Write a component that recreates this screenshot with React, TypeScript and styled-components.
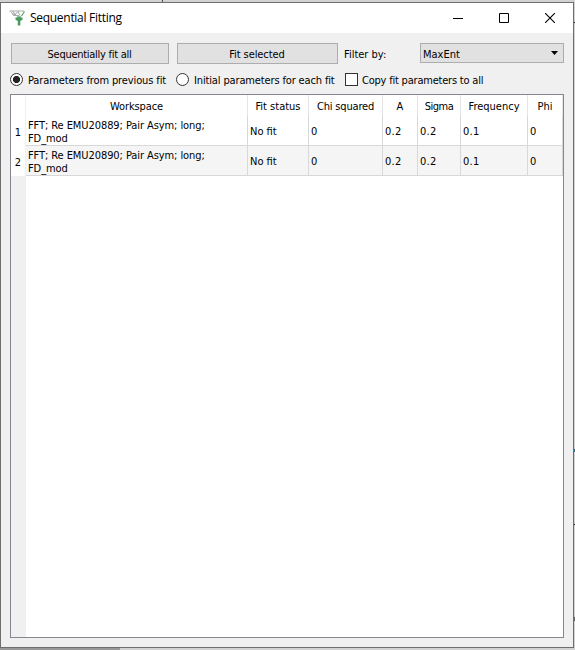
import React from 'react';
import styled, { createGlobalStyle } from 'styled-components';

const GlobalStyle = createGlobalStyle`
  * { box-sizing: border-box; }
  body { margin: 0; overflow: hidden; background: #c9c9c9; }
`;

const Desktop = styled.div`
  width: 575px;
  height: 650px;
  padding: 2px 1px 2px 0;
  background:
    linear-gradient(#1e1e1e, #1e1e1e) 574px 22px / 1px 1px no-repeat,
    linear-gradient(#2b6a94, #2b6a94) 574px 449px / 1px 3px no-repeat,
    linear-gradient(#111, #111) 574px 524px / 1px 1px no-repeat,
    linear-gradient(#666, #666) 574px 617px / 1px 4px no-repeat,
    linear-gradient(#555, #555) 162px 0 / 1px 2px no-repeat,
    linear-gradient(#999, #999) 0 648px / 120px 2px no-repeat,
    #d2d2d2;
`;

const Window = styled.main`
  display: flex;
  flex-direction: column;
  width: 574px;
  height: 646px;
  border: 1px solid #6e6e6e;
  background: #f0f0f0;
  color: #000;
  font: 11px/13px 'DejaVu Sans Condensed', 'DejaVu Sans', sans-serif;
  font-stretch: condensed;
`;

const TitleBar = styled.header`
  display: flex;
  align-items: center;
  height: 30px;
  padding: 0 1px 0 8px;
  background: #fff;
`;

const Title = styled.h1`
  flex: 1;
  margin: 0 0 0 4px;
  font: 400 12px/16px 'Open Sans', sans-serif;
  letter-spacing: -0.29px;
`;

const Caption = styled.button`
  display: flex;
  align-items: center;
  justify-content: center;
  width: 46px;
  height: 29px;
  padding: 0;
  border: 0;
  background: none;
  &:last-child { width: 45px; }
`;

const Text = styled.span<{ $spacing?: number }>`
  white-space: pre;
  letter-spacing: ${({ $spacing = 0 }) => $spacing}px;
`;

const Controls = styled.div`
  display: flex;
  align-items: flex-start;
  height: 21px;
  margin: 10px 9px 0 10px;
`;

const PushButton = styled.button<{ $width: number }>`
  width: ${({ $width }) => $width}px;
  height: 21px;
  margin-right: 8px;
  padding: 2px 1px 0 0;
  border: 1px solid #adadad;
  background: #e1e1e1;
  color: #000;
  font: inherit;
`;

const FilterLabel = styled.label`
  width: 76px;
  margin-left: -2px;
  padding-top: 5px;
`;

const Combo = styled.div`
  display: flex;
  align-items: center;
  justify-content: space-between;
  width: 144px;
  height: 20px;
  padding: 2px 5px 0 2px;
  border: 1px solid #adadad;
  background: #e1e1e1;
  svg { margin-bottom: 2px; }
`;

const Options = styled.div`
  display: flex;
  align-items: center;
  height: 15px;
  margin: 8px 9px 0 9px;
`;

const Option = styled.label<{ $width: number; $gap?: number }>`
  display: flex;
  align-items: center;
  gap: ${({ $gap = 5 }) => $gap}px;
  width: ${({ $width }) => $width}px;
  ${Text} { padding-top: 2px; }
`;

const Radio = styled.i<{ $on?: boolean }>`
  flex: none;
  width: 13px;
  height: 13px;
  border: 1px solid #333;
  border-radius: 50%;
  background: ${({ $on }) => ($on ? 'radial-gradient(circle, #222 3.2px, #fff 3.9px)' : '#fff')};
`;

const CheckBox = styled.i`
  flex: none;
  width: 13px;
  height: 13px;
  border: 1px solid #333;
  background: #fff;
`;

const TableView = styled.section`
  width: 554px;
  height: 544px;
  margin: 7px 0 0 9px;
  border: 1px solid #828790;
  background: linear-gradient(90deg, #f0f0f0 15px, #fff 15px);
`;

const Row = styled.div<{ $height: number; $alt?: boolean }>`
  display: grid;
  grid-template-columns: 15px 222px 61px 74px 35px 43px 67px 35px;
  width: 552px;
  height: ${({ $height }) => $height}px;
  background: linear-gradient(90deg, #fff 15px, ${({ $alt }) => ($alt ? '#f5f5f5' : '#fff')} 15px 552px);
`;

const HeadCell = styled.div`
  display: flex;
  align-items: center;
  justify-content: center;
  padding-top: 2px;
  border-right: 1px solid #e5e5e5;
`;

const RowNumber = styled.div`
  display: flex;
  align-items: center;
  justify-content: center;
  padding-top: 2px;
  border-right: 1px solid #f0f0f0;
`;

const Cell = styled.div`
  display: flex;
  align-items: center;
  padding: 2px 0 0 2px;
  line-height: 13px;
  border: solid #d8d8d8;
  border-width: 0 1px 1px 0;
`;

const FunnelIcon = () => (
  <svg width="17" height="17" viewBox="0 0 17 17" fill="none">
    <path d="M.5 1h14.5M2 1.5l3 4.5M4 1l2 4 3-3.5 2 4M3 4h4M5 5.5h5" stroke="#a5aaa6" />
    <path d="M15.5 1.5l-3 4.5" stroke="#60a575" strokeWidth="1.3" />
    <path d="M6.5 7.5h7v2.2l-2.2 1.3v4.5H8.8V11L6.5 9.7z" fill="#459b5c" />
    <path d="M8 7h4" stroke="#277542" />
  </svg>
);

const headings: [string, number][] = [
  ['Workspace', -0.1], ['Fit status', 0], ['Chi squared', -0.17], ['A', 0],
  ['Sigma', -0.5], ['Frequency', 0], ['Phi', 0],
];

const rows = [20889, 20890].map((run) => [
  `FFT; Re EMU${run}; Pair Asym; long;\nFD_mod`, 'No fit', '0', '0.2', '0.2', '0.1', '0',
]);

const columnSpacing = [-0.08, 0, 0, 0.3, 0.3, 0.3, 0];

export default function App() {
  return (
    <Desktop>
      <GlobalStyle />
      <Window>
        <TitleBar>
          <FunnelIcon />
          <Title>Sequential Fitting</Title>
          <Caption aria-label="Minimize">
            <svg width="10" height="10"><path d="M0 5.5h10" stroke="#000" /></svg>
          </Caption>
          <Caption aria-label="Maximize">
            <svg width="10" height="10"><path d="M.5.5h9v9h-9z" fill="none" stroke="#000" /></svg>
          </Caption>
          <Caption aria-label="Close">
            <svg width="10" height="10"><path d="M0 0l10 10M10 0L0 10" stroke="#000" strokeWidth="1.1" /></svg>
          </Caption>
        </TitleBar>
        <Controls>
          <PushButton $width={158}><Text $spacing={-0.27}>Sequentially fit all</Text></PushButton>
          <PushButton $width={161}><Text $spacing={-0.08}>Fit selected</Text></PushButton>
          <FilterLabel><Text>Filter by:</Text></FilterLabel>
          <Combo>
            <Text>MaxEnt</Text>
            <svg width="7" height="4"><path d="M0 0h7L3.5 4z" /></svg>
          </Combo>
        </Controls>
        <Options>
          <Option $width={166}><Radio $on /><Text $spacing={-0.12}>Parameters from previous fit</Text></Option>
          <Option $width={169}><Radio /><Text $spacing={-0.14}>Initial parameters for each fit</Text></Option>
          <Option $width={160} $gap={4}><CheckBox /><Text $spacing={-0.21}>Copy fit parameters to all</Text></Option>
        </Options>
        <TableView>
          <Row $height={21}>
            <RowNumber />
            {headings.map(([name, spacing]) => (
              <HeadCell key={name}><Text $spacing={spacing}>{name}</Text></HeadCell>
            ))}
          </Row>
          {rows.map((row, index) => (
            <Row key={index} $height={30} $alt={index === 1}>
              <RowNumber>{index + 1}</RowNumber>
              {row.map((value, column) => (
                <Cell key={column}><Text $spacing={columnSpacing[column]}>{value}</Text></Cell>
              ))}
            </Row>
          ))}
        </TableView>
      </Window>
    </Desktop>
  );
}
